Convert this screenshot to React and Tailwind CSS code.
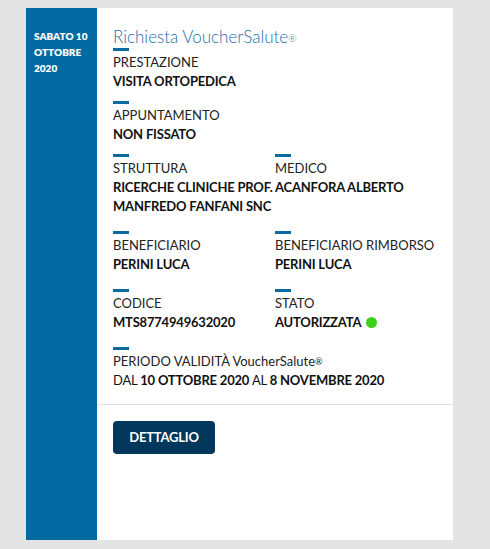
import React from "react";

const F = { fontFamily: "Lato, 'Open Sans', sans-serif" };

function Dash() {
  return <div className="h-[3px] w-4 bg-[#0a6aa3]" />;
}

function Field({ label, children, extra }) {
  return (
    <div>
      <Dash />
      <div className="mt-[2px] text-[13px] leading-[19px] text-[#222] font-normal whitespace-nowrap">{label}</div>
      <div className="text-[13px] leading-[19px] text-[#111] font-bold tracking-[-0.2px] flex items-center whitespace-nowrap">
        {children}
        {extra}
      </div>
    </div>
  );
}

export default function App() {
  return (
    <div className="min-h-[549px] bg-[#e4e4e4] pl-[26px] pt-[8px] pb-[9px]" style={F}>
      <div className="flex w-[427px] h-[532px] bg-white">
        <div className="w-[71px] shrink-0 bg-[#046aa1] pl-[8px] pt-[20px]">
          <div className="text-[10px] leading-[16px] font-extrabold text-white">
            SABATO 10
            <br />
            OTTOBRE
            <br />
            2020
          </div>
        </div>
        <div className="flex-1 flex flex-col">
          <div className="pl-[16px] pt-[18px] pb-[14px] border-b border-[#dfe3e8]">
            <div className="text-[17px] leading-[22px] font-light text-[#1f6ea9]">
              Richiesta VoucherSalute<sup className="text-[10px] relative top-[-1px]">®</sup>
            </div>
            <div className="mb-[10px]">
              <Field label="PRESTAZIONE">VISITA ORTOPEDICA</Field>
            </div>
            <div className="mb-[10px]">
              <Field label="APPUNTAMENTO">NON FISSATO</Field>
            </div>
            <div className="grid grid-cols-[162px_1fr] gap-y-[15px]">
              <Field label="STRUTTURA">
                <span>
                  RICERCHE CLINICHE PROF.
                  <br />
                  MANFREDO FANFANI SNC
                </span>
              </Field>
              <Field label="MEDICO">
                <span className="self-start">ACANFORA ALBERTO</span>
              </Field>
              <Field label="BENEFICIARIO">PERINI LUCA</Field>
              <Field label="BENEFICIARIO RIMBORSO">PERINI LUCA</Field>
              <Field label="CODICE">MTS8774949632020</Field>
              <Field
                label="STATO"
                extra={<span className="ml-[5px] inline-block w-[11px] h-[11px] rounded-full bg-[#3cd01a]" />}
              >
                AUTORIZZATA
              </Field>
            </div>
            <div className="mt-[15px]">
              <Dash />
              <div className="mt-[2px] text-[13px] leading-[19px] text-[#222] whitespace-nowrap">
                PERIODO VALIDITÀ VoucherSalute<sup className="text-[9px] relative top-[-1px]">®</sup>
              </div>
              <div className="text-[13px] leading-[19px] text-[#111] tracking-[-0.2px] whitespace-nowrap">
                DAL <span className="font-bold">10 OTTOBRE 2020</span> AL{" "}
                <span className="font-bold">8 NOVEMBRE 2020</span>
              </div>
            </div>
          </div>
          <div className="pl-[16px] pt-[16px]">
            <button className="h-[33px] w-[102px] rounded-[4px] bg-[#00375a] text-white text-[13px] tracking-[-0.2px] font-bold flex items-center justify-center">
              DETTAGLIO
            </button>
          </div>
        </div>
      </div>
    </div>
  );
}
